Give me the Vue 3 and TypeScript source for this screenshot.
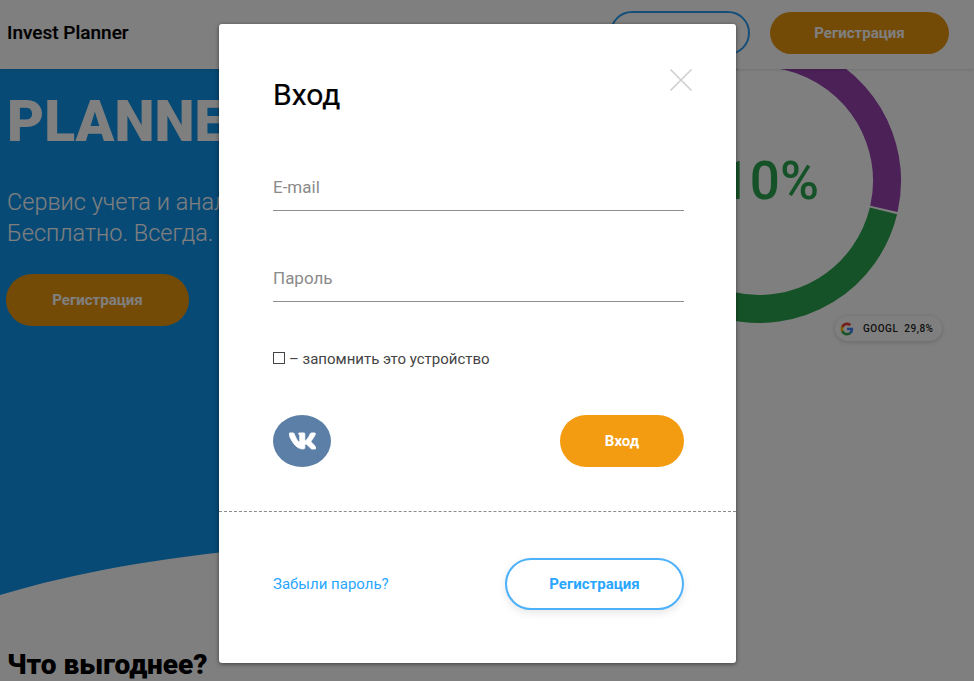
<script setup lang="ts">
const vkPath =
  'M19.376 17.123h-1.744c-.66 0-.864-.525-2.05-1.727-1.033-1-1.49-1.135-1.744-1.135-.356 0-.458.102-.458.593v1.575c0 .424-.135.678-1.253.678-1.846 0-3.896-1.118-5.335-3.202C4.624 10.857 4.03 8.57 4.03 8.096c0-.254.102-.491.593-.491h1.744c.44 0 .61.203.78.678.863 2.49 2.303 4.675 2.896 4.675.22 0 .322-.102.322-.66V9.721c-.068-1.186-.695-1.287-.695-1.71 0-.204.17-.407.44-.407h2.744c.373 0 .508.203.508.643v3.473c0 .372.17.508.271.508.22 0 .407-.136.813-.542 1.254-1.406 2.151-3.574 2.151-3.574.119-.254.322-.491.763-.491h1.744c.525 0 .644.27.525.643-.22 1.017-2.354 4.031-2.354 4.031-.186.305-.254.44 0 .78.186.254.796.779 1.203 1.253.745.847 1.32 1.558 1.473 2.05.17.49-.085.744-.576.744z'
</script>

<template>
  <div class="page">
    <header class="topbar">
      <div class="brand">Invest Planner</div>
      <div class="top-actions">
        <button class="btn-outline-top" type="button">Вход</button>
        <button class="btn-top" type="button">Регистрация</button>
      </div>
    </header>

    <section class="hero">
      <svg class="hero-bg" width="700" height="540" viewBox="0 0 700 540">
        <path d="M0 0H700V470C500 462 200 465 0 526Z" fill="#1095ec" />
      </svg>
      <svg class="ring" width="300" height="300" viewBox="0 0 300 300">
        <circle cx="150" cy="150" r="128" fill="none" stroke="#9642b0" stroke-width="28" stroke-dasharray="273.7 600" transform="rotate(-110 150 150)" />
        <circle cx="150" cy="150" r="128" fill="none" stroke="#2aa44f" stroke-width="28" stroke-dasharray="268 600" transform="rotate(13.5 150 150)" />
      </svg>
      <div class="percent">10%</div>
      <div class="pill">
        <svg class="g-logo" width="14" height="14" viewBox="0 0 24 24">
          <path fill="#4285F4" d="M22.56 12.25c0-.78-.07-1.53-.2-2.25H12v4.26h5.92c-.26 1.37-1.04 2.53-2.21 3.31v2.77h3.57c2.08-1.92 3.28-4.74 3.28-8.09z" />
          <path fill="#34A853" d="M12 23c2.97 0 5.46-.98 7.28-2.66l-3.57-2.77c-.98.66-2.23 1.06-3.71 1.06-2.86 0-5.29-1.93-6.16-4.53H2.18v2.84C3.99 20.53 7.7 23 12 23z" />
          <path fill="#FBBC05" d="M5.84 14.09c-.22-.66-.35-1.36-.35-2.09s.13-1.43.35-2.09V7.07H2.18C1.43 8.55 1 10.22 1 12s.43 3.45 1.18 4.93l3.66-2.84z" />
          <path fill="#EA4335" d="M12 5.38c1.62 0 3.06.56 4.21 1.64l3.15-3.15C17.45 2.09 14.97 1 12 1 7.7 1 3.99 3.47 2.18 7.07l3.66 2.84c.87-2.6 3.3-4.53 6.16-4.53z" />
        </svg>
        <span>GOOGL</span><span>29,8%</span>
      </div>

      <div class="hero-copy">
        <h1>PLANNER</h1>
        <p>Сервис учета и анализа инвестиций.<br />Бесплатно. Всегда.</p>
        <button class="btn-hero" type="button">Регистрация</button>
      </div>
    </section>

    <h2 class="section-title">Что выгоднее?</h2>

    <div class="backdrop">
      <div class="modal">
        <div class="modal-main">
          <div class="modal-head">
            <h3>Вход</h3>
            <svg class="close" width="24" height="24" viewBox="0 0 24 24">
              <path d="M1.5 1.5L22.5 22.5M22.5 1.5L1.5 22.5" stroke="#cfcfcf" stroke-width="1.6" fill="none" />
            </svg>
          </div>
          <input class="field" type="text" placeholder="E-mail" />
          <input class="field" type="password" placeholder="Пароль" />
          <label class="remember">
            <span class="check"></span>
            <span>– запомнить это устройство</span>
          </label>
          <div class="actions">
            <button class="vk" type="button" aria-label="VK">
              <svg width="27" height="18" viewBox="4 7.4 16 10">
                <path :d="vkPath" fill="#fff" stroke="#fff" stroke-width=".5" />
              </svg>
            </button>
            <button class="btn-login" type="button">Вход</button>
          </div>
        </div>
        <div class="modal-foot">
          <a class="forgot">Забыли пароль?</a>
          <button class="btn-register" type="button">Регистрация</button>
        </div>
      </div>
    </div>
  </div>
</template>

<style>
html, body { margin: 0; background: #fff; overflow: hidden; }
</style>

<style scoped>
.page {
  position: relative;
  width: 974px;
  height: 681px;
  overflow: hidden;
  background: #fff;
  font-family: Roboto, "Noto Sans", sans-serif;
}
button { font-family: inherit; cursor: pointer; }
.topbar {
  position: relative;
  z-index: 2;
  height: 69px;
  box-sizing: border-box;
  padding: 12px 25px 0 7px;
  display: flex;
  justify-content: space-between;
  background: #fff;
  box-shadow: 0 1px 3px rgba(0,0,0,.12);
}
.brand { font-size: 19px; font-weight: 500; line-height: 42px; color: #000; -webkit-text-stroke: .2px #000; }
.top-actions { display: flex; gap: 20px; align-items: flex-start; margin-top: -1px; }
.btn-outline-top {
  width: 140px; height: 44px; border: 2px solid #2b9cf0; border-radius: 22px;
  background: #fff; color: #2b9cf0; font-size: 15px; font-weight: 700;
}
.btn-top, .btn-hero {
  border: 0; background: #e8940f; color: #fff; font-size: 15px; font-weight: 700;
}
.btn-top { width: 179px; height: 42px; border-radius: 21px; margin-top: 1px; }
.hero { position: relative; height: 540px; }
.hero-bg { position: absolute; left: 0; top: 0; }
.ring { position: absolute; left: 609px; top: -38px; }
.percent {
  position: absolute; left: 680px; top: 80px; width: 139px; text-align: right;
  font-size: 53px; line-height: 64px; font-weight: 500; color: #2aa44f;
}
.pill {
  position: absolute; left: 835px; top: 247px; width: 107px; height: 25px; box-sizing: border-box;
  display: flex; align-items: center; gap: 6px; padding-left: 5px;
  border-radius: 13px; background: #fff; box-shadow: 0 1px 5px rgba(0,0,0,.2);
  font-size: 10px; font-weight: 500; letter-spacing: .5px; color: #222;
}
.g-logo { margin-right: 3px; }
.hero-copy { position: relative; padding: 15px 0 0 7px; }
.hero-copy h1 {
  margin: 0; font-size: 57px; line-height: 76px; font-weight: 900; color: #fff; white-space: nowrap;
}
.hero-copy p {
  margin: 27px 0 0; font-size: 23.5px; line-height: 31px; font-weight: 300; color: #fff; white-space: nowrap;
}
.btn-hero { display: block; width: 183px; height: 52px; border-radius: 26px; margin: 25px 0 0 -1px; }
.section-title {
  margin: 0; padding: 40px 0 0 7px; font-size: 28px; line-height: 32px; font-weight: 900; color: #000;
}
.backdrop {
  position: absolute; inset: 0; z-index: 5; background: rgba(0,0,0,.5);
  display: flex; justify-content: flex-start; align-items: flex-start; padding: 24px 0 0 219px; box-sizing: border-box;
}
.modal {
  width: 517px; height: 639px; background: #fff; border-radius: 3px;
  box-shadow: 0 1px 4px rgba(0,0,0,.5); display: flex; flex-direction: column;
}
.modal-main {
  height: 487px; padding: 0 52px 0 54px;
  border-bottom: 1px dashed #8c8c8c;
}
.modal-head { display: flex; justify-content: space-between; padding-top: 50px; height: 42px; }
.modal-head h3 { margin: 0; font-size: 30px; line-height: 42px; font-weight: 400; color: #000; -webkit-text-stroke: .2px #000; }
.close { margin: -6px -9px 0 0; }
.field {
  display: block; width: 411px; box-sizing: border-box; height: 46px; padding: 0 0 2px; margin-top: 45px;
  border: 0; border-bottom: 1px solid #8e8e8e; outline: 0; background: transparent;
  font: 400 17px Roboto, sans-serif; color: #333;
}
.field:first-of-type { margin-top: 49px; }
.field::placeholder { color: #8a8a8a; opacity: 1; }
.remember {
  display: flex; align-items: center; gap: 4px; margin-top: 47px; height: 20px;
  font-size: 15px; color: #444;
}
.check { width: 10px; height: 10px; border: 1px solid #444; background: #fff; flex: none; margin-top: -2px; }
.actions { display: flex; justify-content: space-between; margin-top: 46px; }
.vk {
  width: 58px; height: 52px; border: 0; padding: 0; border-radius: 50%; background: #5b7fa6;
  display: flex; align-items: center; justify-content: center;
}
.btn-login {
  width: 124px; height: 52px; border: 0; border-radius: 26px; background: #f39c12;
  color: #fff; font-size: 15px; font-weight: 700;
}
.modal-foot {
  flex: 1; display: flex; justify-content: space-between; align-items: flex-start;
  padding: 46px 52px 0 54px;
}
.forgot { font-size: 15px; line-height: 52px; color: #2aa6ff; }
.btn-register {
  width: 179px; height: 52px; box-sizing: border-box; border: 2px solid #4db2fb; border-radius: 26px;
  background: #fff; color: #2aa6ff; font-size: 15px; font-weight: 700;
  box-shadow: 0 3px 8px rgba(0,0,0,.1);
}
</style>
